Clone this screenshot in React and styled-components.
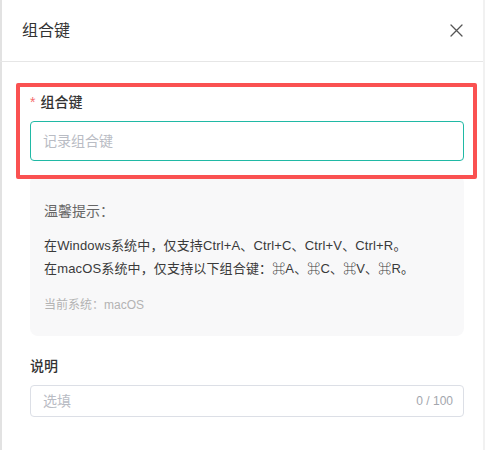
import styled, { createGlobalStyle } from 'styled-components';

const GlobalStyle = createGlobalStyle`
  * {
    box-sizing: border-box;
  }
  html, body {
    margin: 0;
    padding: 0;
    background: #fff;
  }
  body {
    font-family: "Liberation Sans", "Noto Sans CJK SC", sans-serif;
    color: #333;
  }
`;

const CloseIcon = () => (
  <svg width="13" height="13" viewBox="0 0 13 13" fill="none">
    <path d="M1 1L12 12M12 1L1 12" stroke="#555" strokeWidth="1.3" strokeLinecap="round" />
  </svg>
);

const App = () => {
  return (
    <>
      <GlobalStyle />
      <Panel>
        <Header>
          <Title>组合键</Title>
          <CloseBtn type="button" aria-label="关闭">
            <CloseIcon />
          </CloseBtn>
        </Header>

        <Body>
          <Field>
            <Highlight />
            <Label required>组合键</Label>
            <TextInput $active placeholder="记录组合键" readOnly />
          </Field>

          <Tips>
            <TipsTitle>温馨提示：</TipsTitle>
            <TipsLines>
              <p>在Windows系统中，仅支持Ctrl+A、Ctrl+C、Ctrl+V、Ctrl+R。</p>
              <p>在macOS系统中，仅支持以下组合键：⌘A、⌘C、⌘V、⌘R。</p>
            </TipsLines>
            <CurrentOs>当前系统：macOS</CurrentOs>
          </Tips>

          <NoteField>
            <Label>说明</Label>
            <InputWrap>
              <TextInput $small placeholder="选填" />
              <Counter>0 / 100</Counter>
            </InputWrap>
          </NoteField>
        </Body>
      </Panel>
    </>
  );
};

export default App;

const Panel = styled.div`
  width: 485px;
  min-height: 450px;
  background: #fff;
  border-left: 2px solid #e2e2e2;
  border-right: 2px solid #f1f1f1;
`;

const Header = styled.div`
  height: 62px;
  display: flex;
  align-items: center;
  justify-content: space-between;
  padding: 0 17px 0 20px;
  border-bottom: 1px solid #e6e6e6;
  margin-left: -2px;
`;

const Title = styled.h2`
  margin: 0;
  font-size: 16px;
  font-weight: 400;
  line-height: 24px;
  color: #333;
  padding-left: 2px;
`;

const CloseBtn = styled.button`
  display: flex;
  align-items: center;
  justify-content: center;
  width: 20px;
  height: 20px;
  padding: 0;
  border: none;
  background: transparent;
  cursor: pointer;
`;

const Body = styled.div`
  padding: 29px 19px 0 28px;
  display: flex;
  flex-direction: column;
`;

const Field = styled.div`
  position: relative;
  display: flex;
  flex-direction: column;
`;

/* red outline drawn over the shortcut field */
const Highlight = styled.div`
  position: absolute;
  top: -8px;
  left: -14px;
  right: -13px;
  bottom: -18px;
  border: 4px solid #fa5151;
  border-radius: 2px;
  z-index: 2;
  pointer-events: none;
`;

const Label = styled.label`
  font-size: 14px;
  font-weight: 500;
  line-height: 22px;
  color: #333;
  margin-bottom: 8px;

  &::before {
    content: ${({ required }) => (required ? "'*'" : 'none')};
    color: #f56c6c;
    font-weight: 400;
    margin-right: 5px;
  }
`;

const InputWrap = styled.div`
  position: relative;
  display: flex;
`;

const TextInput = styled.input`
  width: 100%;
  height: ${({ $small }) => ($small ? '32px' : '40px')};
  padding: 0 12px;
  border: 1px solid ${({ $active }) => ($active ? '#20b9a5' : '#dcdfe6')};
  border-radius: 4px;
  font-family: "Liberation Sans", "Noto Sans CJK SC", sans-serif;
  font-size: 14px;
  color: #333;
  outline: none;
  background: #fff;

  &::placeholder {
    color: #b9bcc4;
  }
`;

const Counter = styled.span`
  position: absolute;
  right: 11px;
  top: 50%;
  transform: translateY(-50%);
  font-size: 12px;
  color: #a3a6ad;
`;

const Tips = styled.div`
  margin-top: 14px;
  padding: 25px 14px 21px;
  background: #f8f8f9;
  border-radius: 8px;
`;

const TipsTitle = styled.div`
  font-size: 14px;
  line-height: 22px;
  color: #666;
`;

const TipsLines = styled.div`
  margin-top: 12px;

  p {
    margin: 0;
    font-size: 13px;
    line-height: 23px;
    letter-spacing: 0.15px;
    color: #3a3a3a;
  }
`;

const CurrentOs = styled.div`
  margin-top: 15px;
  font-size: 12px;
  line-height: 20px;
  color: #b3b3b3;
`;

const NoteField = styled.div`
  margin-top: 19px;
  display: flex;
  flex-direction: column;
`;
